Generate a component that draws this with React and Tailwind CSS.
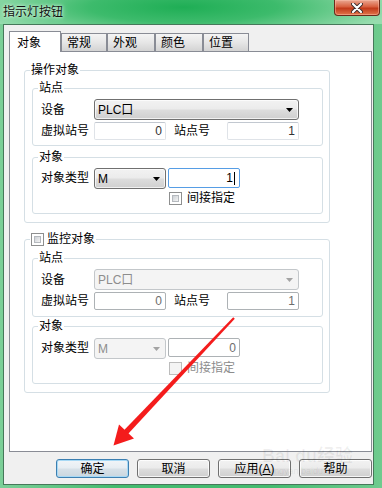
import clsx from "clsx";

const font = "font-['Liberation_Sans','Noto_Sans_CJK_SC',sans-serif]";

function Arrow({ disabled }) {
  return (
    <svg width="7" height="4" viewBox="0 0 7 4">
      <polygon points="0,0 7,0 3.5,4" fill={disabled ? "#a3a3a3" : "#000"} />
    </svg>
  );
}

function Combo({ value, width, disabled, h = "h-[21px]" }) {
  return (
    <div
      className={clsx(
        "flex items-center justify-between rounded-[3px] border pl-[3px] pr-[5px] text-[12px] leading-[14px]",
        width,
        h,
        disabled
          ? "border-[#c3c7ca] bg-[#f4f4f4] text-[#8d8d8d]"
          : "border-[#707070] bg-[linear-gradient(#f2f2f2_0%,#ebebeb_48%,#dddddd_52%,#cfcfcf_100%)] text-black shadow-[inset_0_0_0_1px_rgba(255,255,255,0.7)]"
      )}
    >
      <span>{value}</span>
      <Arrow disabled={disabled} />
    </div>
  );
}

function Field({ value, disabled, focused, h = "h-[18px]" }) {
  return (
    <div
      className={clsx(
        "flex w-[72px] items-center justify-end rounded-[2px] border bg-white pr-[3px] text-[12px] leading-[14px]",
        h,
        focused
          ? "border-[#569de5] pr-[4px]"
          : disabled
          ? "border-[#adb2b5] text-[#6d6d6d]"
          : "border-[#dfe3e8] border-t-[#c2c8d0] text-[#333]"
      )}
    >
      <span>{value}</span>
      {focused && <span className="ml-[1px] h-[13px] w-[1px] bg-black" />}
    </div>
  );
}

function Check({ disabled }) {
  if (disabled) {
    return <span className="block h-[13px] w-[13px] border border-[#bcbcbc] bg-[#f4f4f4]" />;
  }
  return (
    <span className="block h-[13px] w-[13px] border border-[#8e8f8f] bg-white p-[2px]">
      <span className="block h-full w-full border border-[#b5b9be] bg-[linear-gradient(135deg,#cdd1d6,#f4f4f4)]" />
    </span>
  );
}

function Box({ legend, className, children }) {
  return (
    <fieldset className={clsx("rounded-[3px] border border-[#d5dfe5] p-0", className)}>
      <legend className="ml-[5px] px-[1px] text-[12px] leading-[14px]">{legend}</legend>
      {children}
    </fieldset>
  );
}

function Station({ disabled }) {
  return (
    <div className="pl-[8px] pt-[4px]">
      <div className="flex items-center">
        <span className="w-[53px]">设备</span>
        <Combo value="PLC口" width="w-[205px]" disabled={disabled} />
      </div>
      <div className="mt-[2px] flex items-center">
        <span className="w-[53px]">虚拟站号</span>
        <Field value="0" disabled={disabled} />
        <span className="ml-[8px] w-[53px]">站点号</span>
        <Field value="1" disabled={disabled} />
      </div>
    </div>
  );
}

function Target({ disabled }) {
  return (
    <div className={clsx("pl-[8px]", disabled ? "pt-[5px]" : "pt-[4px]")}>
      <div className="flex items-start">
        <span className="w-[53px] leading-[21px]">对象类型</span>
        <Combo value="M" width="w-[72px]" disabled={disabled} />
        <div className="ml-[2px]">
          {disabled ? <Field value="0" disabled h="h-[19px]" /> : <Field value="1" focused h="h-[20px]" />}
        </div>
      </div>
      <div className="ml-[128px] mt-[2px] flex h-[14px] items-center gap-[5px]">
        <Check disabled={disabled} />
        <span className={disabled ? "text-[#8c8c8c]" : ""}>间接指定</span>
      </div>
    </div>
  );
}

function Tab({ label, active, width }) {
  return (
    <div
      className={clsx(
        "border border-b-0 border-[#898c95] pl-[5px] text-[12px]",
        width,
        active
          ? "relative z-10 mb-[-1px] h-[21px] bg-white pl-[7px] pt-[4px] leading-[14px]"
          : "h-[18px] bg-[linear-gradient(#f4f4f4,#e6e6e6_50%,#d3d3d3)] pt-[2px] leading-[14px]"
      )}
    >
      {label}
    </div>
  );
}

function Button({ children, primary }) {
  return (
    <div
      className={clsx(
        "flex h-[19px] w-[73px] items-center justify-center rounded-[3px] border text-[12px] leading-[14px]",
        primary
          ? "border-[#3c7fb1] bg-[linear-gradient(#f1f5f8_0%,#e6edf2_48%,#d7e1e8_52%,#cad6df_100%)] shadow-[inset_0_0_0_1px_#a7d9f5]"
          : "border-[#707070] bg-[linear-gradient(#f2f2f2_0%,#ebebeb_48%,#dddddd_52%,#cfcfcf_100%)] shadow-[inset_0_0_0_1px_rgba(255,255,255,0.8)]"
      )}
    >
      {children}
    </div>
  );
}

export default function App() {
  return (
    <div
      className={clsx(
        "relative flex h-[488px] w-[382px] flex-col overflow-hidden bg-[linear-gradient(90deg,#7ccf98,#43bb6e_30%,#43bb6e_70%,#6fcb8e)] text-black",
        font
      )}
    >
      {/* title bar */}
      <div className="flex h-[24px] items-start justify-between bg-[radial-gradient(ellipse_55%_140%_at_48%_30%,#1fae55_0%,#3dbb6c_45%,#97dcae_100%)]">
        <span className="pl-[3px] pt-[5px] text-[12px] leading-[14px] text-[#111] [text-shadow:0_0_6px_#d8f5e2,0_0_3px_#e8fbef]">
          指示灯按钮
        </span>
        <div className="mr-[2px] flex h-[16px] w-[46px] items-center justify-center rounded-b-[4px] border border-t-0 border-[#6b2a1a] bg-[linear-gradient(#eaa892_0%,#d8603f_45%,#c13a1a_55%,#e2764a_100%)] shadow-[inset_0_0_0_1px_rgba(255,200,180,0.45)]">
          <svg width="12" height="10" viewBox="0 0 12 10">
            <path d="M2 1 L10 9 M10 1 L2 9" stroke="#3b2a2a" strokeWidth="4" strokeLinecap="round" />
            <path d="M2 1 L10 9 M10 1 L2 9" stroke="#fff" strokeWidth="2.2" strokeLinecap="round" />
          </svg>
        </div>
      </div>

      {/* client */}
      <div className="ml-[3px] flex h-[461px] w-[371px] flex-col border border-[#46785a] bg-[#f0f0f0]">
        <div className="flex h-[26px] items-end pl-[5px]">
          <Tab label="对象" active width="w-[52px]" />
          <Tab label="常规" width="w-[46px]" />
          <Tab label="外观" width="w-[48px]" />
          <Tab label="颜色" width="w-[48px]" />
          <Tab label="位置" width="w-[46px]" />
        </div>

        <div className="ml-[5px] h-[401px] w-[363px] border border-[#898c95] bg-white pl-[14px] pt-[11px] text-[12px] leading-[14px]">
          <Box legend="操作对象" className="h-[160px] w-[306px]">
            <div className="pl-[7px]">
              <Box legend="站点" className="mt-[4px] h-[65px] w-[291px]">
                <Station />
              </Box>
              <Box legend="对象" className="mt-[4px] h-[64px] w-[291px]">
                <Target />
              </Box>
            </div>
          </Box>

          <fieldset className="mt-[9px] h-[161px] w-[306px] rounded-[3px] border border-[#d5dfe5] p-0">
            <legend className="ml-[5px] flex items-center gap-[3px] px-[1px] text-[12px] leading-[14px]">
              <Check />
              <span>监控对象</span>
            </legend>
            <div className="pl-[7px]">
              <Box legend="站点" className="mt-[5px] h-[66px] w-[291px]">
                <Station disabled />
              </Box>
              <Box legend="对象" className="mt-[2px] h-[65px] w-[291px]">
                <Target disabled />
              </Box>
            </div>
          </fieldset>
        </div>

        <div className="ml-[52px] mt-[7px] flex gap-[8px]">
          <Button primary>确定</Button>
          <Button>取消</Button>
          <Button>
            应用(<u>A</u>)
          </Button>
          <Button>帮助</Button>
        </div>
      </div>

      {/* watermark */}
      <div className="pointer-events-none absolute left-[262px] top-[446px] flex flex-col items-start">
        <span className="whitespace-nowrap text-[18px] font-bold leading-[20px] text-black/[0.06]">Bai du经验</span>
        <span className="ml-[8px] whitespace-nowrap text-[9px] leading-[10px] text-black/[0.08]">jingyan.baidu.com</span>
      </div>

      {/* red arrow annotation */}
      <svg className="pointer-events-none absolute left-0 top-0" width="382" height="488" viewBox="0 0 382 488">
        <polygon points="234.8,318.8 233.2,317.2 124,430.2 128,434" fill="#f41c1c" />
        <polygon points="113.5,445.5 119,424.5 134,438.5" fill="#f41c1c" />
      </svg>
    </div>
  );
}
